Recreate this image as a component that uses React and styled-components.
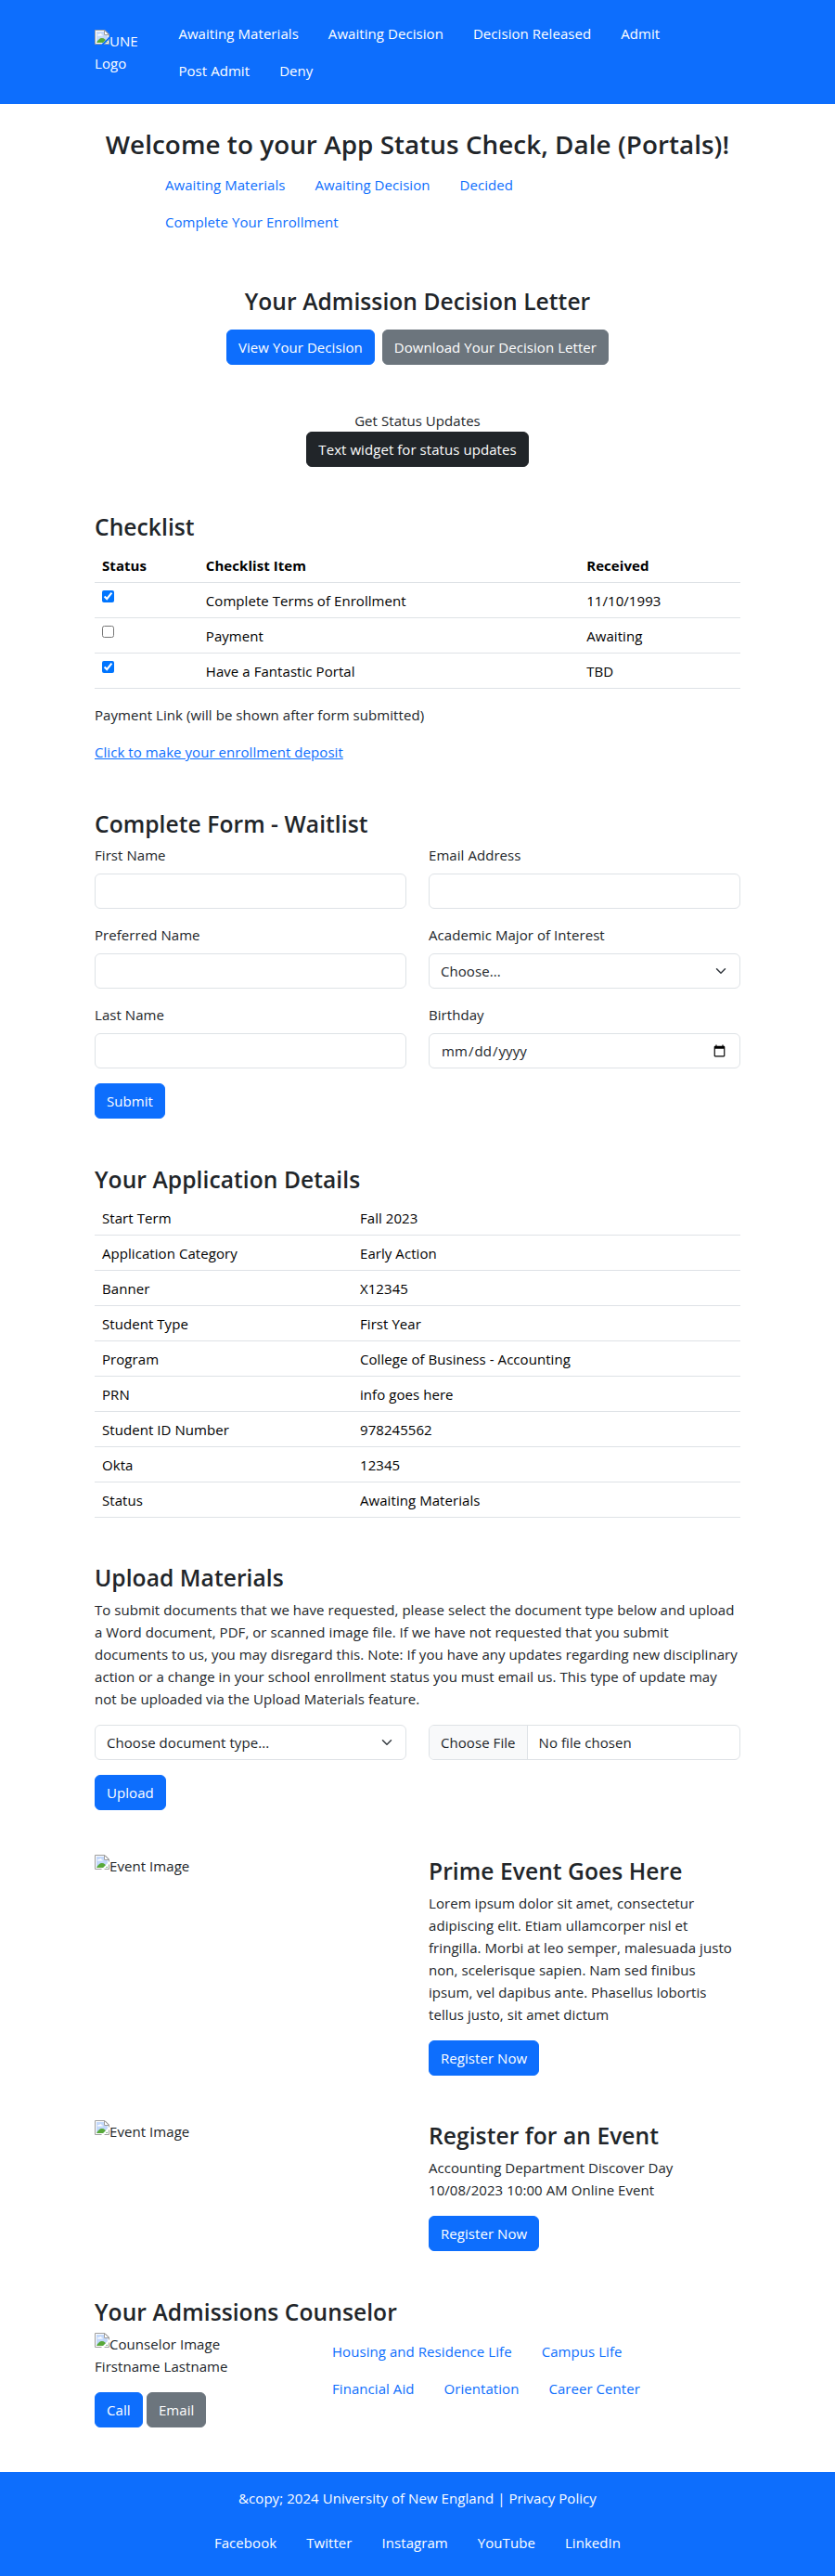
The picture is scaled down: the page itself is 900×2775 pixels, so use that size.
import React from 'react';
import styled, { createGlobalStyle, css } from 'styled-components';

const GlobalStyle = createGlobalStyle`
  *, *::before, *::after { box-sizing: border-box; }
  body {
    margin: 0;
    background: #fff;
    color: #212529;
    font-family: "Open Sans", "Noto Sans", sans-serif;
    font-size: 15px;
    line-height: 24px;
    letter-spacing: 0.06px;
  }
  input, select, button { font: inherit; letter-spacing: inherit; color: inherit; margin: 0; }
  h2, h3, p { margin: 0; }
`;

const Container = styled.div`
  width: 720px;
  margin: 0 auto;
  padding: 0 12px;
`;

const Header = styled.header`
  background: #0d6efd;
  color: #fff;
  padding: 16px 0;
`;

const HeaderRow = styled(Container)`
  display: flex;
  align-items: center;
`;

const Logo = styled.div`
  width: 74.4px;
  flex: none;
`;

const Nav = styled.nav`
  display: flex;
  flex-wrap: wrap;
  justify-content: ${(p) => (p.$center ? 'center' : 'flex-start')};
  width: ${(p) => p.$width || 'auto'};
  margin: ${(p) => (p.$indent ? `0 0 0 ${p.$indent}` : '0')};
`;

const NavLink = styled.a`
  padding: 8px 16px;
  white-space: nowrap;
  text-decoration: none;
  color: ${(p) => (p.$light ? '#fff' : '#0d6efd')};
`;

const Title = styled.h2`
  margin: 24px 0 6px;
  padding-top: 2px;
  font-size: 27.8px;
  line-height: 35.16px;
  font-weight: 600;
  text-align: center;
  white-space: nowrap;
`;

const Section = styled.section`
  margin-bottom: 48px;
  text-align: ${(p) => (p.$center ? 'center' : 'left')};
`;

const Heading = styled.h3`
  margin-bottom: 6.5px;
  padding-top: 1.5px;
  font-size: 24.6px;
  line-height: 31.44px;
  font-weight: 600;
  white-space: nowrap;
`;

const tones = { primary: '#0d6efd', secondary: '#6c757d', dark: '#212529' };

const Button = styled.button`
  height: 38px;
  padding: 0 12px;
  border: 1px solid ${(p) => tones[p.$tone || 'primary']};
  border-radius: 6px;
  background: ${(p) => tones[p.$tone || 'primary']};
  color: #fff;
  white-space: nowrap;
`;

const ButtonRow = styled.div`
  display: flex;
  justify-content: ${(p) => (p.$center ? 'center' : 'flex-start')};
  gap: ${(p) => p.$gap || 8}px;
  margin-top: ${(p) => p.$top || 0}px;
`;

const Table = styled.table`
  width: 100%;
  table-layout: fixed;
  border-collapse: separate;
  border-spacing: 0;
  color: #000;
`;

const Column = styled.col`
  width: ${(p) => p.$width};
`;

const cell = css`
  height: 38px;
  padding: 7px 8px 6px;
  border-bottom: 1px solid #dee2e6;
  text-align: left;
  vertical-align: top;
`;

const HeadCell = styled.th`
  ${cell}
  font-weight: 700;
`;

const Cell = styled.td`
  ${cell}
`;

const Checkbox = styled.input`
  display: block;
  && { margin-top: 1px; }
  width: 13px;
  height: 13px;
`;

const Paragraph = styled.p`
  margin-top: ${(p) => p.$top || 0}px;
  white-space: nowrap;
`;

const TextLink = styled.a`
  color: #0d6efd;
  text-decoration: underline;
`;

const Columns = styled.div`
  display: grid;
  grid-template-columns: 1fr 1fr;
  gap: 16px 24px;
  margin-top: ${(p) => p.$top || 0}px;
  margin-bottom: ${(p) => p.$bottom || 0}px;
`;

const Label = styled.label`
  display: block;
  margin-bottom: 8px;
`;

const control = css`
  display: block;
  width: 100%;
  height: 38px;
  padding: 6px 12px;
  border: 1px solid #dee2e6;
  border-radius: 6px;
  background: #fff;
  color: #212529;
`;

const Input = styled.input`
  ${control}
`;

const FileInput = styled.input`
  ${control}
  overflow: hidden;
  &::file-selector-button {
    height: 36px;
    margin: -6px 12px -6px -12px;
    padding: 6px 12px;
    border: 0 solid #dee2e6;
    border-right-width: 1px;
    background: #f8f9fa;
    color: #212529;
    font: inherit;
    letter-spacing: inherit;
  }
`;

const SelectBox = styled.div`
  position: relative;
`;

const NativeSelect = styled.select`
  ${control}
  appearance: none;
`;

const Chevron = styled.svg`
  position: absolute;
  right: 13px;
  top: 13px;
  width: 16px;
  height: 12px;
  fill: none;
  stroke: #343a40;
  stroke-width: 2;
  stroke-linecap: round;
  stroke-linejoin: round;
  pointer-events: none;
`;

const MissingIcon = styled.svg`
  display: inline-block;
  width: 16px;
  height: 16px;
  vertical-align: top;
`;

const CounselorLayout = styled.div`
  display: grid;
  grid-template-columns: 240px 1fr;
  align-items: start;
`;

const Footer = styled.footer`
  padding: 16px 0;
  background: #0d6efd;
  color: #fff;
  text-align: center;
`;

const FooterText = styled.p`
  margin-bottom: 16px;
`;

function MissingImage({ alt }) {
  return (
    <>
      <MissingIcon viewBox="0 0 16 16" aria-hidden="true">
        <defs>
          <clipPath id="torn-page">
            <path d="M0 0H16V7L7 16H0Z" />
            <path d="M16 10V16H10Z" />
          </clipPath>
        </defs>
        <g clipPath="url(#torn-page)">
          <path d="M.5.5H11L15.5 5V15.5H.5Z" fill="#fff" stroke="#9e9e9e" />
          <path d="M2 2H10V6H14V14H2Z" fill="#c3d8fa" />
          <path d="M3 6.5C3 5 4.4 4.9 5 5.3C5.4 3.9 7.6 4.1 7.6 5.5C8.6 5.4 9 6.1 8.8 6.5Z" fill="#fff" />
          <path d="M2 14C3.5 11 5.5 9 7.8 9C10.4 9 12.5 11 14 14Z" fill="#58a939" />
          <path d="M10.5.5V5.5H15.5Z" fill="#fff" stroke="#9e9e9e" />
        </g>
      </MissingIcon>
      {alt}
    </>
  );
}

function Links({ items, light, ...rest }) {
  return (
    <Nav {...rest}>
      {items.map((item) => (
        <NavLink key={item} $light={light}>{item}</NavLink>
      ))}
    </Nav>
  );
}

function Select({ children }) {
  return (
    <SelectBox>
      <NativeSelect>
        <option>{children}</option>
      </NativeSelect>
      <Chevron viewBox="0 0 16 16">
        <path d="M2 5L8 11L14 5" />
      </Chevron>
    </SelectBox>
  );
}

function Field({ label, type = 'text', choice }) {
  return (
    <div>
      <Label>{label}</Label>
      {choice ? <Select>{choice}</Select> : <Input type={type} />}
    </div>
  );
}

function Lines({ lines }) {
  return lines.map((line, i) => (
    <React.Fragment key={line}>
      {i > 0 && <br />}
      {line}
    </React.Fragment>
  ));
}

function EventSection({ title, lines }) {
  return (
    <Section>
      <Columns>
        <div><MissingImage alt="Event Image" /></div>
        <div>
          <Heading>{title}</Heading>
          <Paragraph><Lines lines={lines} /></Paragraph>
          <ButtonRow $top={16}><Button>Register Now</Button></ButtonRow>
        </div>
      </Columns>
    </Section>
  );
}

const checklist = [
  [true, 'Complete Terms of Enrollment', '11/10/1993'],
  [false, 'Payment', 'Awaiting'],
  [true, 'Have a Fantastic Portal', 'TBD'],
];

const details = [
  ['Start Term', 'Fall 2023'],
  ['Application Category', 'Early Action'],
  ['Banner', 'X12345'],
  ['Student Type', 'First Year'],
  ['Program', 'College of Business - Accounting'],
  ['PRN', 'info goes here'],
  ['Student ID Number', '978245562'],
  ['Okta', '12345'],
  ['Status', 'Awaiting Materials'],
];

export default function App() {
  return (
    <>
      <GlobalStyle />
      <Header>
        <HeaderRow>
          <Logo><MissingImage alt="UNE" /><br />Logo</Logo>
          <Links
            light
            $width="600px"
            items={['Awaiting Materials', 'Awaiting Decision', 'Decision Released', 'Admit', 'Post Admit', 'Deny']}
          />
        </HeaderRow>
      </Header>

      <Container as="main">
        <Title>Welcome to your App Status Check, Dale (Portals)!</Title>
        <Section>
          <Links
            $width="576px"
            $indent="60px"
            items={['Awaiting Materials', 'Awaiting Decision', 'Decided', 'Complete Your Enrollment']}
          />
        </Section>

        <Section $center>
          <Heading>Your Admission Decision Letter</Heading>
          <ButtonRow $center $top={14.5}>
            <Button>View Your Decision</Button>
            <Button $tone="secondary">Download Your Decision Letter</Button>
          </ButtonRow>
        </Section>

        <Section $center>
          <Paragraph>Get Status Updates</Paragraph>
          <ButtonRow $center>
            <Button $tone="dark">Text widget for status updates</Button>
          </ButtonRow>
        </Section>

        <Section>
          <Heading>Checklist</Heading>
          <Table>
            <colgroup>
              <Column $width="111.8px" />
              <Column $width="410.4px" />
              <Column />
            </colgroup>
            <thead>
              <tr>
                <HeadCell>Status</HeadCell>
                <HeadCell>Checklist Item</HeadCell>
                <HeadCell>Received</HeadCell>
              </tr>
            </thead>
            <tbody>
              {checklist.map(([done, item, received]) => (
                <tr key={item}>
                  <Cell><Checkbox type="checkbox" defaultChecked={done} /></Cell>
                  <Cell>{item}</Cell>
                  <Cell>{received}</Cell>
                </tr>
              ))}
            </tbody>
          </Table>
          <Paragraph $top={16}>Payment Link (will be shown after form submitted)</Paragraph>
          <Paragraph $top={16}><TextLink>Click to make your enrollment deposit</TextLink></Paragraph>
        </Section>

        <Section>
          <Heading>Complete Form - Waitlist</Heading>
          <Columns $bottom={16}>
            <Field label="First Name" />
            <Field label="Email Address" />
            <Field label="Preferred Name" />
            <Field label="Academic Major of Interest" choice="Choose..." />
            <Field label="Last Name" />
            <Field label="Birthday" type="date" />
          </Columns>
          <ButtonRow><Button>Submit</Button></ButtonRow>
        </Section>

        <Section>
          <Heading>Your Application Details</Heading>
          <Table>
            <colgroup>
              <Column $width="278px" />
              <Column />
            </colgroup>
            <tbody>
              {details.map(([name, value]) => (
                <tr key={name}>
                  <Cell>{name}</Cell>
                  <Cell>{value}</Cell>
                </tr>
              ))}
            </tbody>
          </Table>
        </Section>

        <Section>
          <Heading>Upload Materials</Heading>
          <Paragraph>
            <Lines
              lines={[
                'To submit documents that we have requested, please select the document type below and upload',
                'a Word document, PDF, or scanned image file. If we have not requested that you submit',
                'documents to us, you may disregard this. Note: If you have any updates regarding new disciplinary',
                'action or a change in your school enrollment status you must email us. This type of update may',
                'not be uploaded via the Upload Materials feature.',
              ]}
            />
          </Paragraph>
          <Columns $top={16} $bottom={16}>
            <Select>Choose document type...</Select>
            <FileInput type="file" />
          </Columns>
          <ButtonRow><Button>Upload</Button></ButtonRow>
        </Section>

        <EventSection
          title="Prime Event Goes Here"
          lines={[
            'Lorem ipsum dolor sit amet, consectetur',
            'adipiscing elit. Etiam ullamcorper nisl et',
            'fringilla. Morbi at leo semper, malesuada justo',
            'non, scelerisque sapien. Nam sed finibus',
            'ipsum, vel dapibus ante. Phasellus lobortis',
            'tellus justo, sit amet dictum',
          ]}
        />
        <EventSection
          title="Register for an Event"
          lines={['Accounting Department Discover Day', '10/08/2023 10:00 AM Online Event']}
        />

        <Section>
          <Heading>Your Admissions Counselor</Heading>
          <CounselorLayout>
            <div>
              <MissingImage alt="Counselor Image" />
              <Paragraph>Firstname Lastname</Paragraph>
              <ButtonRow $top={16} $gap={4.3}>
                <Button>Call</Button>
                <Button $tone="secondary">Email</Button>
              </ButtonRow>
            </div>
            <Links
              $width="400px"
              items={['Housing and Residence Life', 'Campus Life', 'Financial Aid', 'Orientation', 'Career Center']}
            />
          </CounselorLayout>
        </Section>
      </Container>

      <Footer>
        <FooterText>{'&copy; 2024 University of New England | Privacy Policy'}</FooterText>
        <Links light $center items={['Facebook', 'Twitter', 'Instagram', 'YouTube', 'LinkedIn']} />
      </Footer>
    </>
  );
}
